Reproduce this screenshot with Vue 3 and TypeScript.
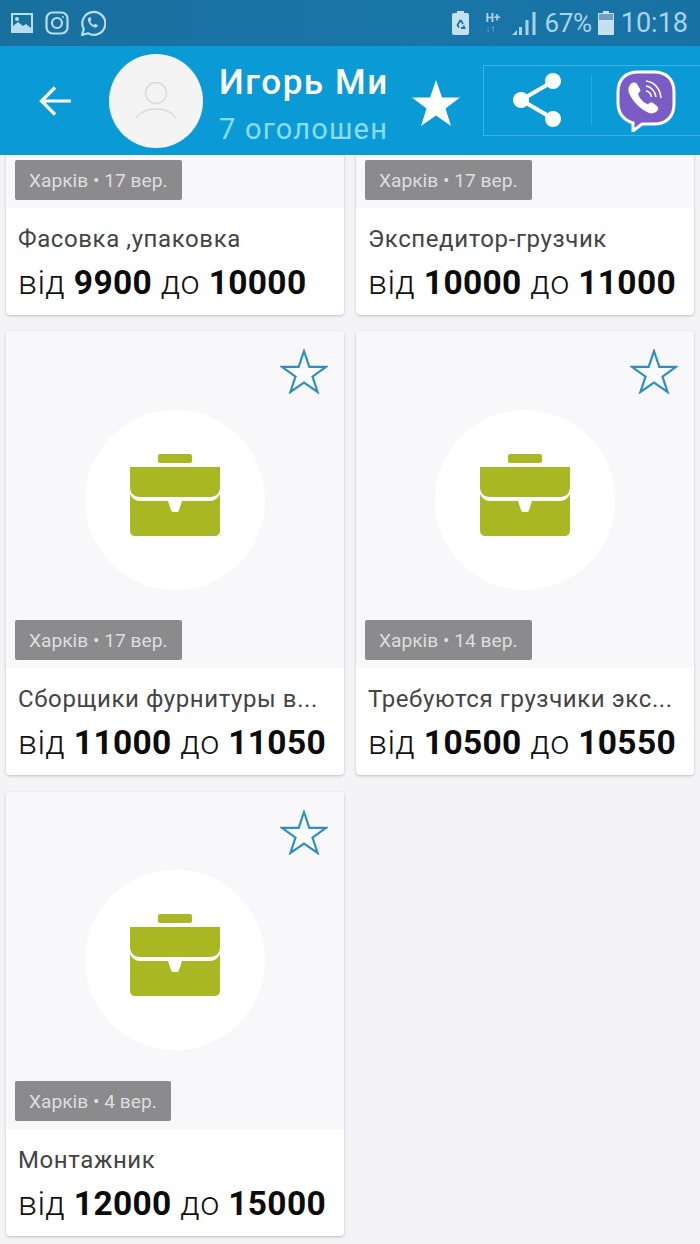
<script setup lang="ts">
interface Job { city: string; date: string; title: string; from: string; to: string }
const jobs: Job[] = [
  { city: 'Харків', date: '17 вер.', title: 'Фасовка ,упаковка', from: '9900', to: '10000' },
  { city: 'Харків', date: '17 вер.', title: 'Экспедитор-грузчик', from: '10000', to: '11000' },
  { city: 'Харків', date: '17 вер.', title: 'Сборщики фурнитуры в...', from: '11000', to: '11050' },
  { city: 'Харків', date: '14 вер.', title: 'Требуются грузчики экс...', from: '10500', to: '10550' },
  { city: 'Харків', date: '4 вер.', title: 'Монтажник', from: '12000', to: '15000' },
]
</script>

<template>
  <div class="screen">
    <div class="status">
      <div class="status-left">
        <svg width="24" height="22" viewBox="0 0 24 22"><path fill="#b9dcee" fill-rule="evenodd" d="M1 1h22v20H1z M3 3v11l5-4 5 4 3-2 5 4V3z"/><circle cx="7" cy="7" r="2" fill="#b9dcee"/></svg>
        <svg width="24" height="24" viewBox="0 0 24 24" fill="none" stroke="#b9dcee" stroke-width="2.2"><rect x="1.5" y="1.5" width="21" height="21" rx="6"/><circle cx="12" cy="12" r="5"/><circle cx="18" cy="6" r="1" fill="#b9dcee" stroke="none"/></svg>
        <svg width="26" height="27" viewBox="0 0 26 27" fill="none"><path d="M2 25l1.8-6A11.5 11.5 0 1 1 8 23.3z" stroke="#b9dcee" stroke-width="2.2" stroke-linejoin="round"/><path d="M9 7.5c-1.6 1-1.6 3 0 5.500 1.500 2.500 3.500 4 6 4.500 1.500.2 3-1 3-2.300l-3-1.500-1.300 1.300c-1.500-.6-2.700-1.900-3.500-3.500l1.200-1.300L10.500 7z" fill="#b9dcee"/></svg>
      </div>
      <div class="status-right">
        <svg class="batt-rec" width="17" height="24" viewBox="0 0 17 24"><path fill="#c5e0ef" d="M5 0h7v2h3a2 2 0 0 1 2 2v18a2 2 0 0 1-2 2H2a2 2 0 0 1-2-2V4a2 2 0 0 1 2-2h3z"/><path fill="none" stroke="#1a75a8" stroke-width="1.800" d="M8.500 9l2.500 4M8.500 9l-3 5 1.500 2.500M9 17h3.500l-1-2.500"/></svg>
        <div class="net"><span class="net-h">H+</span><span class="net-a"><i class="dim">↓</i>↑</span></div>
        <svg class="signal" width="24" height="24" viewBox="0 0 24 24"><path fill="#a9d3e9" d="M0 24l5-5v5zM7 16h3v8H7zM13.500 9h3v15h-3zM20.500 1h3v23h-3z"/></svg>
        <span class="pct">67%</span>
        <svg class="batt" width="16" height="24" viewBox="0 0 16 24"><path fill="#c5e0ef" d="M5 0h6v2h4a1 1 0 0 1 1 1v20a1 1 0 0 1-1 1H1a1 1 0 0 1-1-1V3a1 1 0 0 1 1-1h4z"/><rect x="1" y="3" width="14" height="6" fill="#6f9fbb"/></svg>
        <span class="clock">10:18</span>
      </div>
    </div>

    <header class="bar">
      <svg class="back" width="34" height="32" viewBox="0 0 34 32" fill="none" stroke="#fff" stroke-width="3.200"><path d="M33 16H4M17 2.500 3.500 16 17 29.500"/></svg>
      <div class="avatar">
        <svg width="44" height="38" viewBox="0 0 44 38" fill="none" stroke="#dcdcde" stroke-width="1.600"><circle cx="22" cy="11" r="10.500"/><path d="M2 36c5-7 12-9 20-9s15 2 20 9"/></svg>
      </div>
      <div class="who">
        <div class="name">Игорь Ми</div>
        <div class="count">7 оголошен</div>
      </div>
      <svg class="fav" width="50" height="48" viewBox="0 0 50 48"><path fill="#fff" d="M25 1l6 17.500h18L34.500 29.500 40 47 25 36.500 10 47l5.500-17.500L1 18.500h18z"/></svg>
      <div class="actions">
        <div class="act act-share">
          <svg width="50" height="56" viewBox="0 0 50 56" fill="none"><path d="M39 10 8 28l31 18" stroke="#fff" stroke-width="4"/><circle cx="8" cy="28" r="8" fill="#fff"/><circle cx="40" cy="9" r="8" fill="#fff"/><circle cx="40" cy="47" r="8" fill="#fff"/></svg>
        </div>
        <div class="act act-viber">
          <svg width="60" height="62" viewBox="0 0 60 62">
            <path fill="#7a5cc4" stroke="#fff" stroke-width="3" d="M22 2h16c12 0 20 7 20 20v12c0 13-8 20-20 20h-12l-9 7v-8C8 50 2 44 2 33V22C2 9 10 2 22 2z"/>
            <path fill="#fff" d="M14 15c2-3 5-3 7-1l3 5c1 2 0 3-2 4.500 1 4 5 9 10 11 2-2 3-2.500 5-1.500l4 3c2 2 1.500 4-1 6-3 2-6 2-10-.5C22 37 16 30 13 23c-1-3-1-6 1-8z"/>
            <path fill="none" stroke="#fff" stroke-width="1.500" d="M30 11c8 1 14 7 15 17M30 16c5 .5 9 5 10 11M30 21c3 .5 5 3 5.500 6"/>
          </svg>
        </div>
      </div>
    </header>

    <main class="scroll">
      <div class="grid">
        <article v-for="job in jobs" :key="job.title" class="card">
          <div class="media">
            <svg class="star" width="48" height="45" viewBox="0 0 48 45"><path fill="#f9fafc" stroke="#2f8fc0" stroke-width="2.200" d="M24 2l5.300 15.800H46L32.500 27.600 37.600 43 24 33.500 10.400 43l5.100-15.400L2 17.800h16.700z"/></svg>
            <div class="disc">
              <svg class="case" width="90" height="82" viewBox="0 0 90 82"><rect x="28" y="0" width="34" height="9" rx="2" fill="#a9b723"/><path fill="#a9b723" d="M0 13h90v20c0 6-4 10-10 10H10C4 43 0 39 0 33z"/><path fill="#a9b723" d="M0 40c2 4 5 7 10 7h28l3 9c.5 1.500 1 2 2 2h4c1 0 1.500-.5 2-2l3-9h28c5 0 8-3 10-7v36c0 4-2 6-6 6H6c-4 0-6-2-6-6z"/></svg>
            </div>
            <div class="tag">{{ job.city }} • {{ job.date }}</div>
          </div>
          <div class="body">
            <div class="title">{{ job.title }}</div>
            <div class="price">від <b>{{ job.from }}</b> до <b>{{ job.to }}</b></div>
          </div>
        </article>
      </div>
    </main>
  </div>
</template>

<style scoped>
.screen {
  width: 700px;
  height: 1244px;
  overflow: hidden;
  display: flex;
  flex-direction: column;
  background: #f4f4f6;
  font-family: Roboto, "Noto Sans", sans-serif;
}
.status {
  height: 46px;
  flex: none;
  display: flex;
  justify-content: space-between;
  align-items: center;
  padding: 0 12px 0 10px;
  background: linear-gradient(90deg, #18709f, #1a75a8 60%, #1872a4);
  color: #a9d3e9;
}
.status-left { display: flex; align-items: center; gap: 11px; }
.status-right { display: flex; align-items: center; }
.batt-rec { margin-right: 16px; }
.net { display: flex; flex-direction: column; width: 18px; line-height: 1; margin-right: 9px; font-weight: 700; }
.net-h { font-size: 12px; }
.net-a { font-size: 10px; }
.dim { font-style: normal; opacity: .55; }
.signal { margin-right: 8px; }
.pct { font-size: 26px; letter-spacing: -0.3px; margin-right: 6px; }
.batt { margin-right: 7px; }
.clock { font-size: 27px; }
.bar {
  height: 109px;
  flex: none;
  display: flex;
  align-items: center;
  background: #0a9bd6;
  color: #fff;
  position: relative;
  z-index: 1;
}
.back { margin-left: 38px; flex: none; }
.avatar {
  flex: none;
  width: 94px;
  height: 94px;
  margin-left: 37px;
  border-radius: 50%;
  background: #f4f4f5;
  display: flex;
  align-items: center;
  justify-content: center;
}
.who { flex: none; width: 169px; margin-left: 16px; overflow: hidden; white-space: nowrap; margin-top: 9px; }
.name { font-size: 35px; font-weight: 500; line-height: 42px; letter-spacing: 1.600px; }
.count { font-size: 29px; line-height: 38px; color: #8adcf8; letter-spacing: 1.200px; margin-top: 6px; }
.fav { flex: none; margin-left: 23px; margin-top: 4px; }
.actions {
  flex: none;
  width: 226px;
  height: 69px;
  margin-left: 22px;
  margin-top: -1px;
  margin-right: -8px;
  border: 1px solid #38b3e6;
  display: flex;
  align-items: center;
}
.act { display: flex; align-items: center; justify-content: center; }
.act-share { width: 108px; height: 48px; border-right: 1px solid #2aaae0; box-sizing: border-box; }
.act-viber { width: 106px; padding-left: 2px; box-sizing: border-box; margin-top: 2px; }
.scroll { flex: 1; min-height: 0; overflow: hidden; }
.grid {
  display: grid;
  grid-template-columns: 338px 338px;
  column-gap: 12px;
  row-gap: 16.500px;
  padding: 0 6px;
  margin-top: -284.500px;
}
.card {
  height: 444px;
  border-radius: 4px;
  overflow: hidden;
  background: #fff;
  box-shadow: 0 1px 3px rgba(0, 0, 0, .22);
  display: flex;
  flex-direction: column;
}
.media {
  height: 337px;
  flex: none;
  position: relative;
  background: #f8f8fa;
  display: flex;
  align-items: center;
  justify-content: center;
}
.star { position: absolute; top: 18px; right: 16px; }
.disc {
  width: 180px;
  height: 180px;
  border-radius: 50%;
  background: #fff;
  display: flex;
  align-items: center;
  justify-content: center;
}
.case { margin-top: -10px; }
.tag {
  position: absolute;
  left: 9px;
  bottom: 8px;
  height: 40px;
  padding: 0 14px;
  border-radius: 2px;
  background: #8b8a8d;
  color: #dedede;
  font-size: 19.200px;
  line-height: 42px;
  white-space: nowrap;
}
.body { padding: 15px 12px 0; min-width: 0; }
.title {
  font-size: 24px;
  line-height: 32px;
  color: #444;
  white-space: nowrap;
  overflow: hidden;
  text-overflow: ellipsis;
  letter-spacing: .6px;
}
.price {
  font-size: 34px;
  font-weight: 300;
  line-height: 44px;
  margin-top: 5px;
  color: #111;
  white-space: nowrap;
  letter-spacing: .35px;
}
.price b { font-weight: 700; color: #0c0c0c; font-size: 33.500px; }
</style>
